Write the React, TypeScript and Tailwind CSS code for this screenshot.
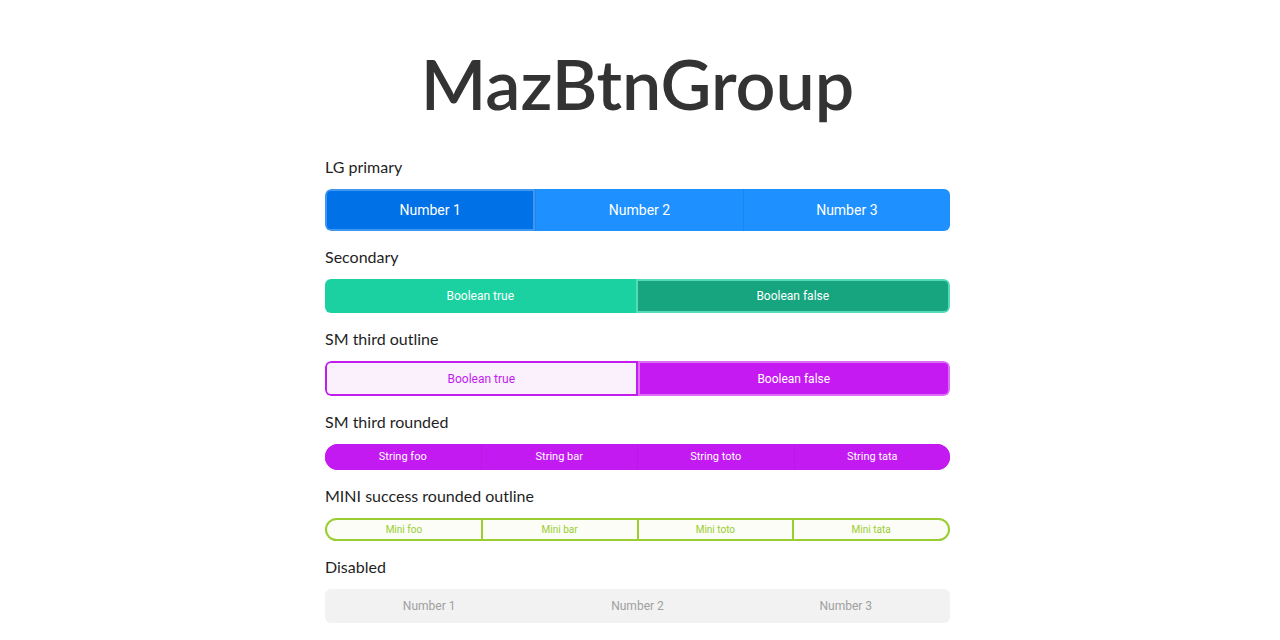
type Item = { label: string; active?: boolean };

type GroupProps = {
  items: Item[];
  className?: string;
  btnClass: string;
  activeClass?: string;
};

function BtnGroup({ items, className, btnClass, activeClass }: GroupProps) {
  return (
    <div className={`flex w-full overflow-hidden ${className ?? ""}`}>
      {items.map((item, i) => (
        <button
          key={i}
          type="button"
          className={`flex-1 flex items-center justify-center ${
            item.active && activeClass ? activeClass : btnClass
          }`}
        >
          {item.label}
        </button>
      ))}
    </div>
  );
}

function Label({ children }: { children: React.ReactNode }) {
  return (
    <div className="text-[16px] leading-6 text-[#1f1f1f] mb-[10px] font-['Lato',sans-serif]">
      {children}
    </div>
  );
}

export default function App() {
  return (
    <div className="min-h-[640px] bg-white font-['Roboto',sans-serif]">
      <div className="w-[630px] mx-auto pr-[5px] pt-[40px]">
        <h1 className="text-center text-[70px] leading-[86px] text-[#333333] font-['Lato',sans-serif] font-semibold mb-[29px]">
          MazBtnGroup
        </h1>

        <Label>LG primary</Label>
        <BtnGroup
          className="h-[42px] rounded-md mb-[14px]"
          btnClass="bg-[#1e90ff] text-white text-[14px] border-l border-[#1a86ef] first:border-l-0"
          activeClass="bg-[#0071e6] text-white text-[14px] border-2 border-[#3f97f0] rounded-l-md"
          items={[
            { label: "Number 1", active: true },
            { label: "Number 2" },
            { label: "Number 3" },
          ]}
        />

        <Label>Secondary</Label>
        <BtnGroup
          className="h-[34px] rounded-md mb-[14px]"
          btnClass="bg-[#1cd1a1] text-white text-[12px]"
          activeClass="bg-[#16a57f] text-white text-[12px] border-2 border-[#54dbb7] rounded-r-md"
          items={[
            { label: "Boolean true" },
            { label: "Boolean false", active: true },
          ]}
        />

        <Label>SM third outline</Label>
        <BtnGroup
          className="h-[35px] rounded-md mb-[14px]"
          btnClass="bg-[#fbf1fd] text-[#c21ded] text-[12px] border-2 border-[#c21ded] rounded-l-md"
          activeClass="bg-[#c61af2] text-white text-[12px] border-2 border-[#dc6ff5] rounded-r-md"
          items={[
            { label: "Boolean true" },
            { label: "Boolean false", active: true },
          ]}
        />

        <Label>SM third rounded</Label>
        <BtnGroup
          className="h-[26px] rounded-full mb-[14px] bg-[#c41af2]"
          btnClass="bg-[#c41af2] text-white text-[11px] border-l border-[#b819e3] first:border-l-0"
          items={[
            { label: "String foo" },
            { label: "String bar" },
            { label: "String toto" },
            { label: "String tata" },
          ]}
        />

        <Label>MINI success rounded outline</Label>
        <BtnGroup
          className="h-[23px] rounded-full mb-[14px] border-2 border-[#9acd32] bg-[#fbfdf6]"
          btnClass="text-[#9acd32] text-[10px] border-l-2 border-[#9acd32] first:border-l-0"
          items={[
            { label: "Mini foo" },
            { label: "Mini bar" },
            { label: "Mini toto" },
            { label: "Mini tata" },
          ]}
        />

        <Label>Disabled</Label>
        <BtnGroup
          className="h-[34px] rounded-md bg-[#f2f2f2]"
          btnClass="text-[#a0a0a0] text-[12px]"
          items={[
            { label: "Number 1" },
            { label: "Number 2" },
            { label: "Number 3" },
          ]}
        />
      </div>
    </div>
  );
}
